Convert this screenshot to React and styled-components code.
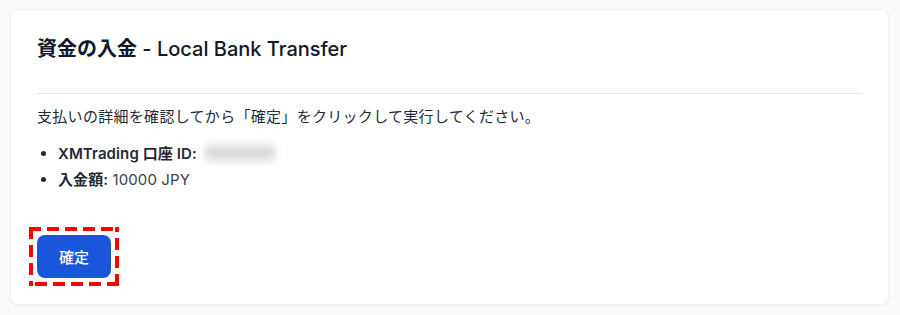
import React from 'react';
import styled, { createGlobalStyle } from 'styled-components';

const GlobalStyle = createGlobalStyle`
  html, body {
    margin: 0;
    padding: 0;
    background: #f9fafb;
  }
  body {
    font-family: 'Inter', 'Noto Sans CJK JP', sans-serif;
    -webkit-font-smoothing: antialiased;
  }
`;

const Page = styled.div`
  padding: 9px 11px 9px 10px;
`;

const Card = styled.section`
  background: #ffffff;
  border: 1px solid #f0f1f4;
  border-radius: 8px;
  box-shadow: 0 1px 2px rgba(17, 24, 39, 0.05);
  padding: 25px 26px 26px 26px;
`;

const Title = styled.h2`
  margin: 0;
  font-size: 20px;
  line-height: 28px;
  font-weight: 500;
  color: #111827;
  padding-bottom: 30px;
  border-bottom: 1px solid #e5e7eb;
`;

const TitleJa = styled.span`
  font-weight: 700;
`;

const Lead = styled.p`
  margin: 11px 0 12px;
  font-size: 15px;
  line-height: 24px;
  letter-spacing: 0.3px;
  color: #1f2937;
`;

const List = styled.ul`
  margin: 0;
  padding-left: 21px;
  list-style: disc;
  color: #1f2937;
`;

const Item = styled.li`
  font-size: 15px;
  line-height: 26px;
  letter-spacing: 0.1px;
`;

const Label = styled.strong`
  font-weight: 600;
  color: #1f2937;
`;

const Value = styled.span`
  color: #374151;
`;

const Masked = styled.span`
  display: inline-block;
  vertical-align: middle;
  width: 70px;
  height: 16px;
  margin-left: 4px;
  margin-top: -3px;
  background: #d9dadd;
  filter: blur(4px);
  border-radius: 4px;
`;

const Actions = styled.div`
  margin-top: 34px;
  display: flex;
  margin-left: -8px;
  margin-bottom: -8px;
`;

/* red dashed annotation frame around the button */
const Highlight = styled.div`
  padding: 8px;
  background:
    repeating-linear-gradient(90deg, #ff0000 0 12px, transparent 12px 18px) left top / 100% 4px no-repeat,
    repeating-linear-gradient(270deg, #ff0000 0 12px, transparent 12px 18px) left bottom / 100% 4px no-repeat,
    repeating-linear-gradient(180deg, #ff0000 0 12px, transparent 12px 18px) left top / 4px 100% no-repeat,
    repeating-linear-gradient(0deg, #ff0000 0 12px, transparent 12px 18px) right top / 4px 100% no-repeat;
`;

const ConfirmButton = styled.button`
  display: block;
  font-family: inherit;
  font-size: 15px;
  font-weight: 500;
  color: #ffffff;
  background: #1a56db;
  border: none;
  border-radius: 8px;
  height: 43px;
  padding: 0 22px;
  cursor: pointer;
`;

export default function App() {
  return (
    <>
      <GlobalStyle />
      <Page>
        <Card>
          <Title>
            <TitleJa>資金の入金</TitleJa> - Local Bank Transfer
          </Title>
          <Lead>支払いの詳細を確認してから「確定」をクリックして実行してください。</Lead>
          <List>
            <Item>
              <Label>XMTrading 口座 ID:</Label> <Masked />
            </Item>
            <Item>
              <Label>入金額:</Label> <Value>10000 JPY</Value>
            </Item>
          </List>
          <Actions>
            <Highlight>
              <ConfirmButton>確定</ConfirmButton>
            </Highlight>
          </Actions>
        </Card>
      </Page>
    </>
  );
}
